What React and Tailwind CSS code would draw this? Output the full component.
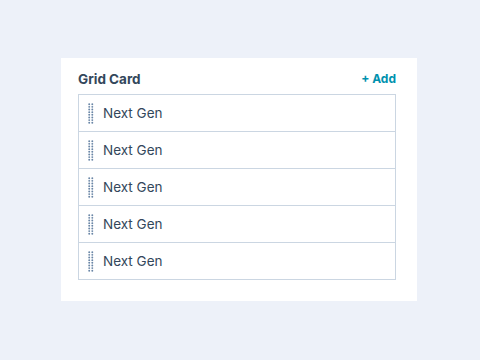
import React from "react";

const rows = ["Next Gen", "Next Gen", "Next Gen", "Next Gen", "Next Gen"];

const Grip = () => (
  <svg width="6" height="21" viewBox="0 0 6 21" className="shrink-0">
    {Array.from({ length: 8 }).map((_, i) => (
      <g key={i} fill="#6a86a6">
        <circle cx="1.2" cy={1.2 + i * 2.65} r="0.95" />
        <circle cx="4.3" cy={1.2 + i * 2.65} r="0.95" />
      </g>
    ))}
  </svg>
);

export default function App() {
  return (
    <div
      className="min-h-screen w-full bg-[#edf1f9] pt-[58px] pl-[61px]"
      style={{ fontFamily: "Inter, 'Open Sans', sans-serif" }}
    >
      <div className="w-[356px] bg-white pt-[11px] pl-[17px] pr-[21px] pb-[21px]">
        <div className="flex items-center justify-between h-[20px] mb-[5px]">
          <span className="text-[13.5px] font-bold text-[#33475b]">Grid Card</span>
          <button className="text-[12px] font-bold text-[#0091ae]">+ Add</button>
        </div>
        <div className="border border-[#cbd6e2]">
          {rows.map((row, index) => (
            <div
              key={index}
              className={`flex items-center pl-[9px] gap-[9px] ${
                index > 0 ? "h-[37px] border-t border-[#cbd6e2]" : "h-[36px]"
              }`}
            >
              <Grip />
              <span className="text-[13.5px] text-[#33475b]">{row}</span>
            </div>
          ))}
        </div>
      </div>
    </div>
  );
}
